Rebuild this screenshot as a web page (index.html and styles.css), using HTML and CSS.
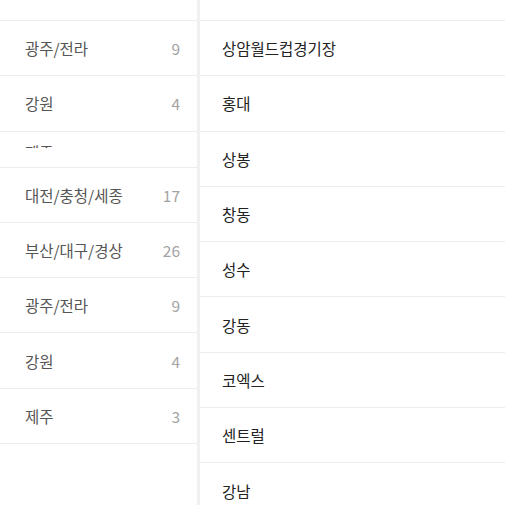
FILE: index.html
```html
<!DOCTYPE html>
<html>
<head>
    <meta charset="utf-8">
    <meta name="viewport" content="width=device-width, initial-scale=1">
    <title>지역 선택</title>
    <link rel="stylesheet" href="styles.css">
</head>
<body>
<div class="picker">
    <div class="regions">
        <div class="row top"></div>
        <div class="row"><span>광주/전라</span><span class="count">9</span></div>
        <div class="row"><span>강원</span><span class="count">4</span></div>
        <div class="row cut"><div class="clip"><span>제주</span><span class="count">3</span></div></div>
        <div class="row"><span>대전/충청/세종</span><span class="count">17</span></div>
        <div class="row"><span>부산/대구/경상</span><span class="count">26</span></div>
        <div class="row"><span>광주/전라</span><span class="count">9</span></div>
        <div class="row"><span>강원</span><span class="count">4</span></div>
        <div class="row"><span>제주</span><span class="count">3</span></div>
    </div>
    <div class="places">
        <div class="place top"></div>
        <div class="place">상암월드컵경기장</div>
        <div class="place">홍대</div>
        <div class="place">상봉</div>
        <div class="place">창동</div>
        <div class="place">성수</div>
        <div class="place">강동</div>
        <div class="place">코엑스</div>
        <div class="place">센트럴</div>
        <div class="place">강남</div>
    </div>
</div>
</body>
</html>
```

FILE: styles.css
```css
*{
    margin: 0;
    padding: 0;
    box-sizing: border-box;
}
body{
    font-family: "Noto Sans CJK KR", "Noto Sans", sans-serif;
    background: #fff;
    height: 505px;
    overflow: hidden;
}
.picker{
    display: flex;
    height: 505px;
}
.regions{
    width: 200px;
    border-right: 3px solid #f0f0f0;
}
.row{
    display: flex;
    justify-content: space-between;
    align-items: center;
    height: 55.3px;
    padding: 0 17px 0 25px;
    border-bottom: 1px solid #ececec;
    font-size: 15.5px;
    color: #555;
}
.row.top{
    height: 21px;
}
.row .count{
    color: #a3a3a3;
}
.row.cut{
    height: 36px;
    align-items: flex-start;
    padding-top: 13px;
}
.clip{
    display: flex;
    justify-content: space-between;
    width: 100%;
    height: 3px;
    overflow: hidden;
    line-height: 15px;
}
.places{
    flex: 1;
}
.place{
    display: flex;
    align-items: center;
    height: 55.3px;
    padding-left: 22px;
    border-bottom: 1px solid #ececec;
    font-size: 15.5px;
    color: #222;
}
.place.top{
    height: 21px;
}
```
